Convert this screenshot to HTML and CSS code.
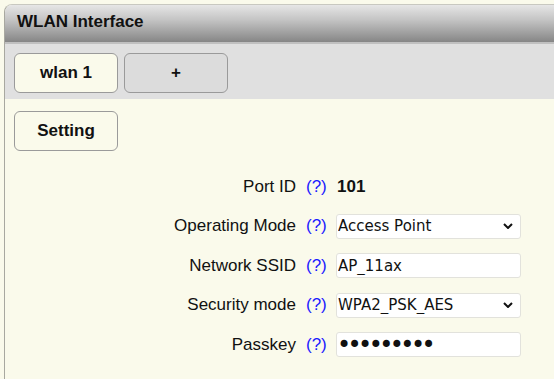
FILE: index.html
```html
<!DOCTYPE html>
<html lang="en">
<head>
    <meta charset="UTF-8">
    <title>WLAN Interface</title>
    <link rel="stylesheet" href="styles.css">
</head>
<body>

    <div class="panel">
        <div class="panel-header">WLAN Interface</div>

        <div class="tab-bar">
            <button class="tab active">wlan 1</button>
            <button class="tab">+</button>
        </div>

        <div class="panel-body">
            <button class="tab active">Setting</button>

            <form class="setting-form">
                <label>Port ID</label>
                <a class="help" href="#">(?)</a>
                <div class="value">101</div>

                <label for="op_mode">Operating Mode</label>
                <a class="help" href="#">(?)</a>
                <select id="op_mode" class="field">
                    <option>Access Point</option>
                    <option>Station</option>
                </select>

                <label for="ssid">Network SSID</label>
                <a class="help" href="#">(?)</a>
                <input id="ssid" class="field" type="text" value="AP_11ax">

                <label for="security">Security mode</label>
                <a class="help" href="#">(?)</a>
                <select id="security" class="field">
                    <option>WPA2_PSK_AES</option>
                    <option>Open</option>
                </select>

                <label for="passkey">Passkey</label>
                <a class="help" href="#">(?)</a>
                <input id="passkey" class="field" type="password" value="123456789">
            </form>
        </div>
    </div>

</body>
</html>
```

FILE: styles.css
```css
body {
    margin: 0;
    background: #fafaeb;
    font-family: 'Liberation Sans', Arial, sans-serif;
    font-size: 17px;
    color: #111;
}

.panel {
    margin: 4px 0 0 4px;
    border-left: 1px solid #a8a8a0;
    border-top: 1px solid #c8c8c0;
    border-top-left-radius: 8px;
    overflow: hidden;
    height: 380px;
}

.panel-header {
    height: 37px;
    line-height: 33px;
    padding-left: 12px;
    font-weight: bold;
    background: linear-gradient(to bottom, #e6e6e6, #c4c4c4 40%, #868686);
    border-bottom: 2px solid #c0c0c0;
}

.tab-bar {
    background: #e0e0e0;
    padding: 9px 9px 6px;
    display: flex;
    gap: 6px;
}

.tab {
    width: 104px;
    height: 40px;
    font-family: inherit;
    font-size: 17px;
    font-weight: bold;
    color: #111;
    background: #dcdcdc;
    border: 1px solid #9a9a9a;
    border-radius: 6px;
}

.tab.active {
    background: #fafaeb;
}

.panel-body {
    padding: 12px 9px;
}

.setting-form {
    display: grid;
    grid-template-columns: 282px 20px 185px;
    grid-auto-rows: 25px;
    column-gap: 10px;
    row-gap: 14.5px;
    align-items: center;
    margin-top: 23px;
}

.setting-form label {
    text-align: right;
}

.help {
    color: #1a1aff;
    text-decoration: none;
}

.value {
    font-weight: bold;
    padding-left: 1px;
}

.field {
    box-sizing: border-box;
    width: 185px;
    height: 25px;
    margin: 0;
    padding: 0 1px;
    font-family: 'DejaVu Sans', sans-serif;
    font-size: 15px;
    color: #111;
    background-color: #fff;
    border: 1px solid #e2e2dc;
    border-radius: 3px;
    outline: none;
}

select.field {
    appearance: none;
    background-image: url("data:image/svg+xml,%3Csvg xmlns='http://www.w3.org/2000/svg' width='10' height='6'%3E%3Cpath d='M1 1l4 4 4-4' fill='none' stroke='%23111' stroke-width='2'/%3E%3C/svg%3E");
    background-repeat: no-repeat;
    background-position: right 7px center;
}

input[type=password].field {
    font-size: 24px;
    letter-spacing: -3.6px;
    padding: 0;
}
```
